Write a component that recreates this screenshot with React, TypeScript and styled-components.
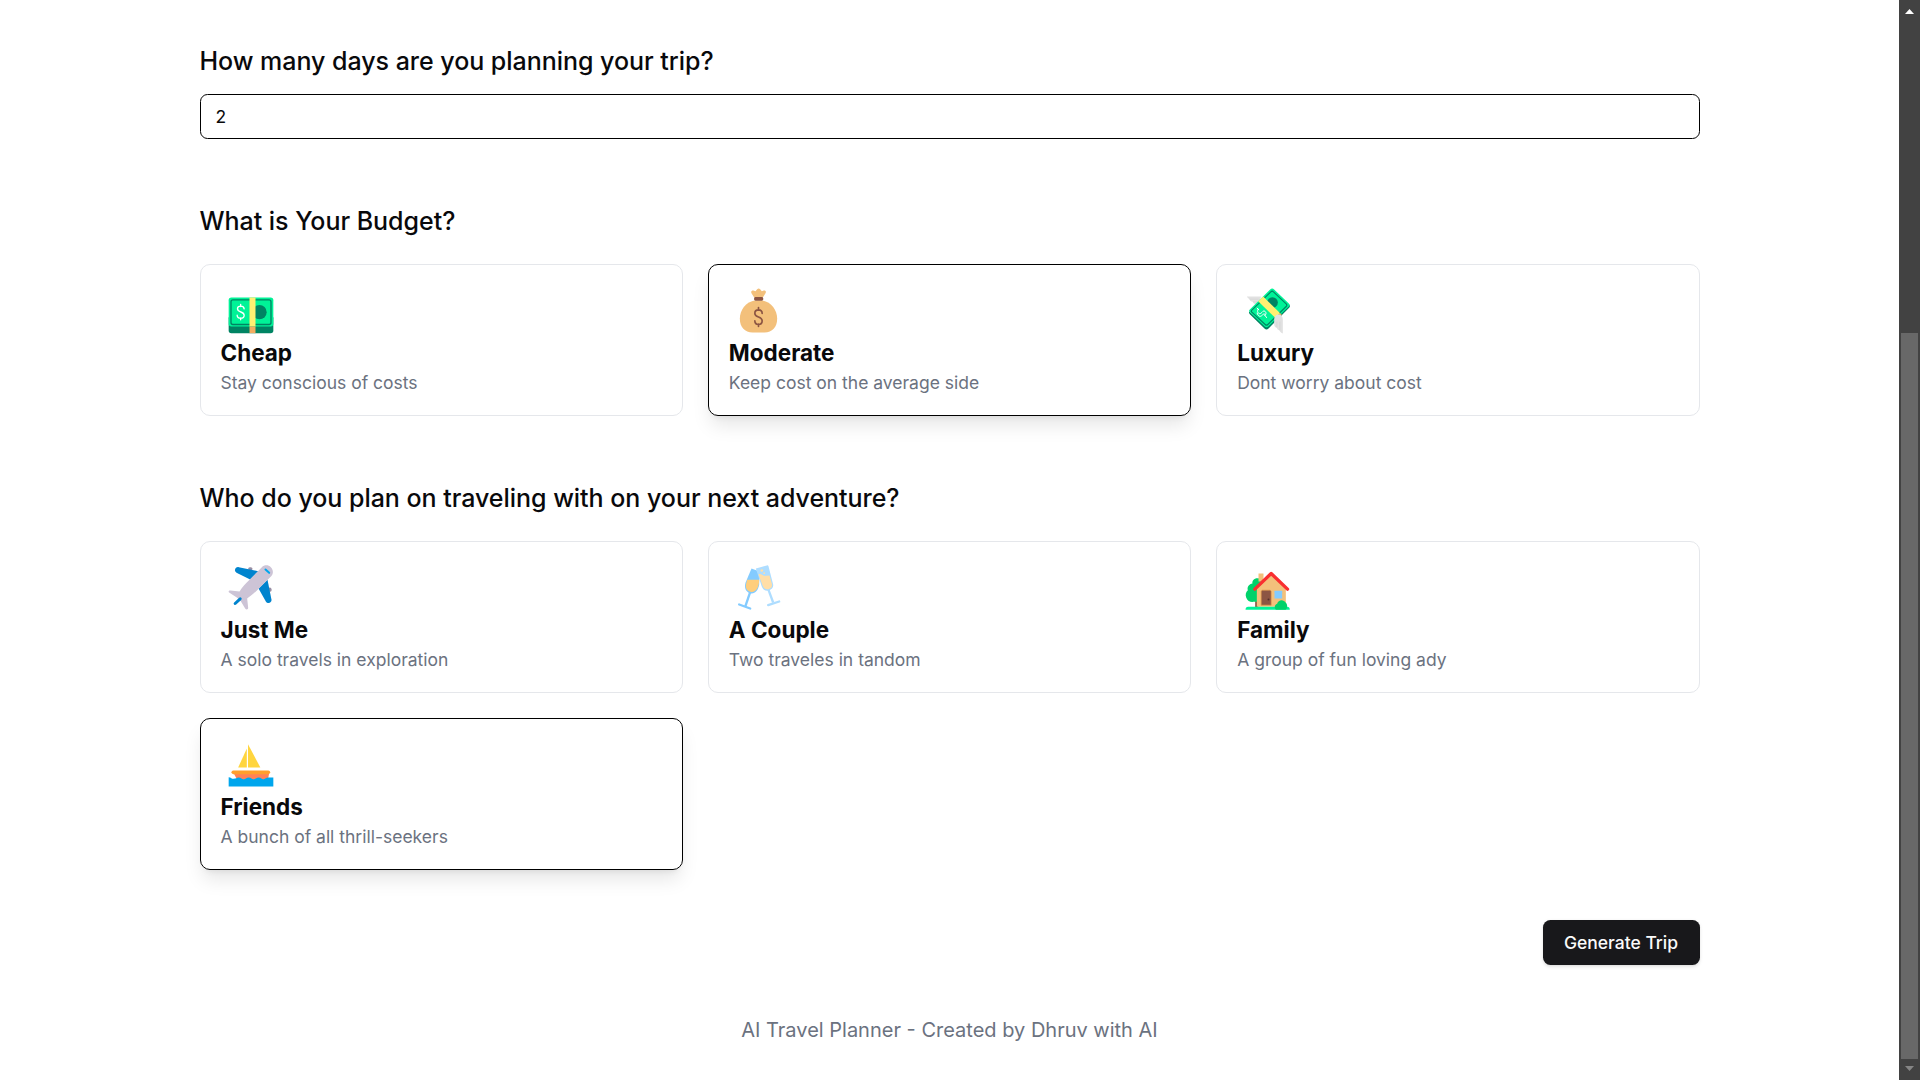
import React, { useState } from "react";
import styled, { createGlobalStyle, css } from "styled-components";

const GlobalStyle = createGlobalStyle`
  *, *::before, *::after { box-sizing: border-box; }
  html, body { margin: 0; padding: 0; background: #fff; overflow: hidden; }
  body { font-family: Inter, "Liberation Sans", sans-serif; color: #09090b; }
  h2, p { margin: 0; }
`;

const Window = styled.div`
  display: flex;
  width: 1920px;
  height: 1080px;
  overflow: hidden;
`;

const Page = styled.div`
  flex: 1;
  display: flex;
  flex-direction: column;
  align-items: center;
  padding-top: 44px;
`;

const Form = styled.main`
  display: flex;
  flex-direction: column;
  gap: 65px;
  width: 1500px;
`;

const Section = styled.section<{ $gap: number }>`
  display: flex;
  flex-direction: column;
  gap: ${(p) => p.$gap}px;
`;

const Question = styled.h2`
  font-size: 25px;
  line-height: 35px;
  font-weight: 500;
  letter-spacing: -0.03px;
`;

const DaysInput = styled.input`
  width: 100%;
  height: 45px;
  padding: 5px 15px;
  border: 1px solid #000;
  border-radius: 7.5px;
  outline: none;
  background: transparent;
  color: #09090b;
  font: 400 17.5px/25px Inter, "Liberation Sans", sans-serif;
`;

const Grid = styled.div`
  display: grid;
  grid-template-columns: repeat(3, 1fr);
  gap: 25px;
`;

const Card = styled.div<{ $selected: boolean }>`
  height: 152px;
  padding: 20px;
  border: 1px solid #e5e7eb;
  border-radius: 10px;
  cursor: pointer;
  ${(p) =>
    p.$selected &&
    css`
      border-color: #000;
      box-shadow: 0 12.5px 18.75px -3.75px rgba(0, 0, 0, 0.1),
        0 5px 7.5px -5px rgba(0, 0, 0, 0.1);
    `}
`;

const Emoji = styled.svg`
  display: block;
  width: 48px;
  height: 48px;
  margin: 2px 0 0 6.5px;
`;

const CardTitle = styled.h2`
  font-size: 22.5px;
  line-height: 35px;
  font-weight: 700;
`;

const CardText = styled.p`
  font-size: 17.5px;
  line-height: 25px;
  color: #6b7280;
`;

const Actions = styled.div`
  display: flex;
  justify-content: flex-end;
  width: 1500px;
  margin: 50px 0;
`;

const Generate = styled.button`
  width: 157px;
  height: 45px;
  padding: 0;
  border: 0;
  border-radius: 7.5px;
  background: #18181b;
  color: #fafafa;
  box-shadow: 0 1.25px 3.75px rgba(0, 0, 0, 0.1), 0 1.25px 2.5px -1.25px rgba(0, 0, 0, 0.1);
  font: 500 17.5px/25px Inter, "Liberation Sans", sans-serif;
`;

const Footer = styled.footer`
  font-size: 20px;
  line-height: 30px;
  color: #6b7280;
`;

const Scrollbar = styled.div`
  display: flex;
  flex-direction: column;
  align-items: center;
  justify-content: space-between;
  width: 21px;
  height: 1080px;
  background: #424242;
`;

const Arrow = styled.svg`
  display: block;
  width: 21px;
  height: 21px;
`;

const Thumb = styled.div`
  width: 17px;
  height: 726px;
  margin-top: auto;
  background: #686868;
`;

const Cash = () => (
  <Emoji viewBox="112.5 94.5 144 144">
    <rect x="117.5" y="180" width="134" height="53" rx="8" fill="#008463" />
    <rect x="117.5" y="126" width="134" height="87" rx="8" fill="#00F397" />
    <rect x="124.5" y="133" width="120" height="74" rx="6" fill="none" stroke="#008463" strokeWidth="4" />
    <circle cx="210" cy="170" r="21.5" fill="#008463" />
    <path d="M164 160c-1-6-5-8-10-8-6 0-10 3-10 8 0 12 20 7 20 19 0 6-4 9-10 9s-11-3-11-9M153.500 147v6M153.500 187v6" fill="none" stroke="#fff" strokeWidth="4" strokeLinecap="round" />
    <path d="M180 126h18v87h-18z" fill="#FFF072" />
    <path d="M180 213h18v20h-18z" fill="#F3AD61" />
  </Emoji>
);

const MoneyBag = () => (
  <Emoji viewBox="107.5 94.5 144 144">
    <path d="M165 126l-8-13c-3-5 1-9 6-8l6 2 5-6c3-3 6-3 9 0l5 6 6-2c5-1 8 3 5 8l-8 13z" fill="#F3C07B" />
    <path d="M166 135h24c27 5 44 29 44 55 0 25-15 41-38 41h-36c-23 0-38-16-38-41 0-26 17-50 44-55z" fill="#F3C07B" />
    <rect x="165" y="124.500" width="27" height="11" rx="4" fill="#8C5543" />
    <path d="M189 174c0-8-5-11-11-11s-11 4-11 10c0 15 22 8 22 23 0 7-5 11-11 11s-11-4-11-11M178 156v8M178 206v7" fill="none" stroke="#8C5543" strokeWidth="5" strokeLinecap="round" />
  </Emoji>
);

const FlyingMoney = () => (
  <Emoji viewBox="114.500 94.5 144 144">
    <path d="M123 123h43l-9 24c-10 1-15-3-16-8-6-1-9-4-10-8-4-2-6-5-8-8z" fill="#E1E1E1" />
    <path d="M131 131h27M141 139h16" stroke="#CDCDCD" strokeWidth="1.500" />
    <path d="M130 168l52 43 68-64c3 3 3 7 0 10l-62 62c-4 4-8 4-12 0l-44-43c-3-3-3-6-2-8z" fill="#008463" />
    <path d="M132 162l61-60c4-4 8-4 12 0l44 42c3 3 3 6 0 9l-61 59c-4 4-8 4-12 0l-44-42c-3-3-3-5 0-8z" fill="#00F397" />
    <path d="M138 164l57-55c3-3 5-3 8 0l38 36c3 3 3 5 0 8l-55 54c-3 3-5 3-8 0l-40-37c-2-2-2-4 0-6z" fill="none" stroke="#008463" strokeWidth="3.500" />
    <circle cx="200" cy="141" r="16" fill="#008463" />
    <path d="M157 161c-3 5-2 9 1 12 9 7 12-12 20-5 4 4 3 9-1 12M154 158l5 5M178 180l4 6M154 173c3 10 9 11 13 8s6-8 10-5" fill="none" stroke="#fff" strokeWidth="3" strokeLinecap="round" />
    <path d="M157 137l15-14 51 50-15 14z" fill="#FFF072" />
    <path d="M208 187l15-14 5 5-17 17z" fill="#F3AD61" />
    <path d="M205 192c0-9 5-15 13-15s13 6 13 16v41c-5-2-8-5-10-9-4-1-7-4-8-8-4-1-8-5-8-10z" fill="#E1E1E1" />
    <path d="M213 198v18M222 199v25" stroke="#CDCDCD" strokeWidth="1.500" />
  </Emoji>
);

const Plane = () => (
  <Emoji viewBox="112.5 100.500 144 144">
    <rect x="176" y="110" width="13" height="10" rx="5" fill="#998EA4" />
    <rect x="236" y="171" width="10" height="13" rx="5" fill="#998EA4" />
    <path d="M148 110l58 12-24 25-41-20c-9-6-4-19 7-17z" fill="#0084CE" />
    <path d="M234 148l12 60c1 10-12 13-17 5l-22-39z" fill="#0084CE" />
    <path d="M217 110c8-8 20-7 27 0s9 19 1 27l-45 45c-12 12-22 17-27 22l3 28c0 6-6 7-9 2l-14-23-10-9-23-15c-5-4-2-8 3-7l27 3c5-6 9-14 21-26z" fill="#CDC4D6" />
    <path d="M228 117l11 10" stroke="#00A6ED" strokeWidth="6" strokeLinecap="round" />
    <path d="M137 219l15-14" stroke="#0084CE" strokeWidth="9" strokeLinecap="round" />
  </Emoji>
);

const Glasses = () => (
  <Emoji viewBox="107.5 100.500 144 144">
    <path d="M208 178l14 38" stroke="#AEDDFF" strokeWidth="7" />
    <path d="M207 224l33-11" stroke="#AEDDFF" strokeWidth="7" strokeLinecap="round" />
    <path d="M153 185l-15 44" stroke="#83CBFF" strokeWidth="7" />
    <path d="M120 222l33 12" stroke="#83CBFF" strokeWidth="7" strokeLinecap="round" />
    <path d="M157 114l24 9-1 40c-3 18-14 29-28 25-13-4-17-17-13-31z" fill="#83CBFF" />
    <path d="M144 148h36c0 25-12 40-26 36-12-3-16-13-13-24z" fill="#FFCE7C" />
    <path d="M170 114l33-9c2-1 4 0 5 2l13 51c4 11-2 19-12 22-13 3-20-5-23-17z" fill="#AEDDFF" />
    <path d="M178 132c9-5 13 7 23 4l10-1 7 25c2 9-2 14-10 16-9 2-15-3-18-12z" fill="#FFDEA7" />
    <circle cx="188" cy="120" r="4" fill="#FFDEA7" />
    <circle cx="195" cy="128" r="2.500" fill="#FFDEA7" />
  </Emoji>
);

const House = () => (
  <Emoji viewBox="114.500 100.500 144 144">
    <path d="M148 205h9v25h-9z" fill="#8C5543" />
    <path d="M155 143c-11 0-17 8-15 16-10 1-17 10-14 20-6 5-8 13-5 22 4 11 13 15 24 13h20v-70z" fill="#00D26A" />
    <path d="M158 129h15v24h-15z" fill="#F3C07B" />
    <path d="M153 171l43-40 44 40v58h-87z" fill="#F3C07B" />
    <path d="M166 224v-40c0-3 2-5 5-5h20c3 0 5 2 5 5v40z" fill="#8C5543" stroke="#E19747" strokeWidth="2" />
    <circle cx="188" cy="207" r="3" fill="#542F2C" />
    <rect x="206" y="181" width="23" height="23" rx="1" fill="#83CBFF" />
    <path d="M147 176l49-47 49 47" fill="none" stroke="#F92F30" strokeWidth="10" strokeLinecap="round" strokeLinejoin="round" />
    <path d="M119 238c0-6 3-9 8-9h117c5 0 8 3 8 9z" fill="#00F397" />
    <path d="M211 238c-6-4-6-15 3-18 3-13 20-14 26-3 6 6 5 17-1 21z" fill="#00D26A" />
  </Emoji>
);

const Sailboat = () => (
  <Emoji viewBox="112.5 91.500 144 144">
    <path d="M175.500 101l37 70h-37z" fill="#FFD53E" />
    <path d="M172 114v57h-26z" fill="#FFD53E" />
    <path d="M133 189h106l-4 19h-92z" fill="#FF8257" />
    <rect x="126" y="180" width="116" height="11" rx="5.500" fill="#FF9F2D" />
    <path d="M117.500 200c7 0 7 5 15 5s8-4 15-4 8 5 15 5 8-5 15-5 8 5 15 5 8-5 15-5 8 5 14 5 8-5 15-5h15v27h-134z" fill="#00A6ED" />
  </Emoji>
);

type Option = { title: string; text: string; Icon: React.FC };

const budgets: Option[] = [
  { title: "Cheap", text: "Stay conscious of costs", Icon: Cash },
  { title: "Moderate", text: "Keep cost on the average side", Icon: MoneyBag },
  { title: "Luxury", text: "Dont worry about cost", Icon: FlyingMoney },
];

const travelers: Option[] = [
  { title: "Just Me", text: "A solo travels in exploration", Icon: Plane },
  { title: "A Couple", text: "Two traveles in tandom", Icon: Glasses },
  { title: "Family", text: "A group of fun loving ady", Icon: House },
  { title: "Friends", text: "A bunch of all thrill-seekers", Icon: Sailboat },
];

type OptionsProps = { items: Option[]; value: string; onChange: (v: string) => void };

const Options = ({ items, value, onChange }: OptionsProps) => (
  <Grid>
    {items.map(({ title, text, Icon }) => (
      <Card key={title} $selected={title === value} onClick={() => onChange(title)}>
        <Icon />
        <CardTitle>{title}</CardTitle>
        <CardText>{text}</CardText>
      </Card>
    ))}
  </Grid>
);

export default function App() {
  const [days, setDays] = useState("2");
  const [budget, setBudget] = useState("Moderate");
  const [group, setGroup] = useState("Friends");

  return (
    <Window>
      <GlobalStyle />
      <Page>
        <Form>
          <Section $gap={15}>
            <Question>How many days are you planning your trip?</Question>
            <DaysInput value={days} onChange={(e) => setDays(e.target.value)} />
          </Section>
          <Section $gap={25}>
            <Question>What is Your Budget?</Question>
            <Options items={budgets} value={budget} onChange={setBudget} />
          </Section>
          <Section $gap={25}>
            <Question>Who do you plan on traveling with on your next adventure?</Question>
            <Options items={travelers} value={group} onChange={setGroup} />
          </Section>
        </Form>
        <Actions>
          <Generate>Generate Trip</Generate>
        </Actions>
        <Footer>AI Travel Planner - Created by Dhruv with AI</Footer>
      </Page>
      <Scrollbar>
        <Arrow viewBox="0 0 21 21">
          <path d="M6 14l4.500-5 4.500 5z" fill="#fff" />
        </Arrow>
        <Thumb />
        <Arrow viewBox="0 0 21 21">
          <path d="M6 7l4.500 5 4.500-5z" fill="#868686" />
        </Arrow>
      </Scrollbar>
    </Window>
  );
}
